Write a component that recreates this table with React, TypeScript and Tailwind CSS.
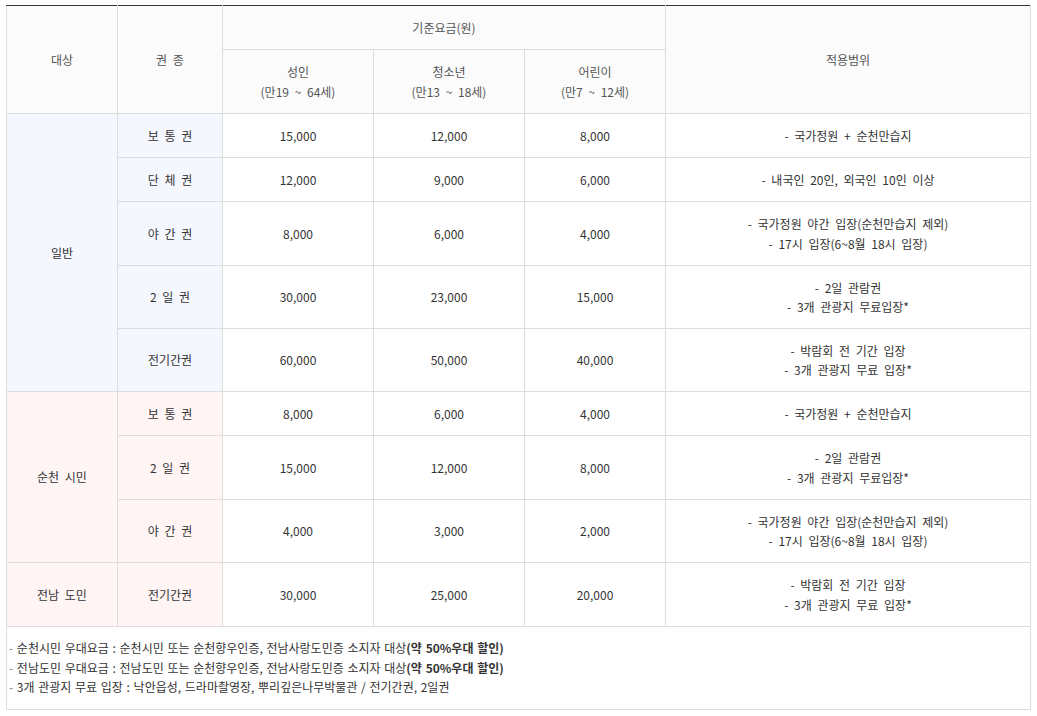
import React from 'react';

type Row = {
  group?: { label: string; rows: number; tone: 'blue' | 'pink' };
  ticket: string;
  tone: 'blue' | 'pink';
  adult: string;
  youth: string;
  child: string;
  scope: string[];
  h: string;
};

const rows: Row[] = [
  { group: { label: '일반', rows: 5, tone: 'blue' }, tone: 'blue', ticket: '보 통 권', adult: '15,000', youth: '12,000', child: '8,000', scope: ['- 국가정원 + 순천만습지'], h: 'h-[44px]' },
  { tone: 'blue', ticket: '단 체 권', adult: '12,000', youth: '9,000', child: '6,000', scope: ['- 내국인 20인, 외국인 10인 이상'], h: 'h-[44px]' },
  { tone: 'blue', ticket: '야 간 권', adult: '8,000', youth: '6,000', child: '4,000', scope: ['- 국가정원 야간 입장(순천만습지 제외)', '- 17시 입장(6~8월 18시 입장)'], h: 'h-[64px]' },
  { tone: 'blue', ticket: '2 일 권', adult: '30,000', youth: '23,000', child: '15,000', scope: ['- 2일 관람권', '- 3개 관광지 무료입장*'], h: 'h-[63px]' },
  { tone: 'blue', ticket: '전기간권', adult: '60,000', youth: '50,000', child: '40,000', scope: ['- 박람회 전 기간 입장', '- 3개 관광지 무료 입장*'], h: 'h-[63px]' },
  { group: { label: '순천 시민', rows: 3, tone: 'pink' }, tone: 'pink', ticket: '보 통 권', adult: '8,000', youth: '6,000', child: '4,000', scope: ['- 국가정원 + 순천만습지'], h: 'h-[44px]' },
  { tone: 'pink', ticket: '2 일 권', adult: '15,000', youth: '12,000', child: '8,000', scope: ['- 2일 관람권', '- 3개 관광지 무료입장*'], h: 'h-[64px]' },
  { tone: 'pink', ticket: '야 간 권', adult: '4,000', youth: '3,000', child: '2,000', scope: ['- 국가정원 야간 입장(순천만습지 제외)', '- 17시 입장(6~8월 18시 입장)'], h: 'h-[63px]' },
  { group: { label: '전남 도민', rows: 1, tone: 'pink' }, tone: 'pink', ticket: '전기간권', adult: '30,000', youth: '25,000', child: '20,000', scope: ['- 박람회 전 기간 입장', '- 3개 관광지 무료 입장*'], h: 'h-[64px]' },
];

const cell = 'border border-[#dddddd] text-center align-middle font-normal [word-spacing:3px]';

const App: React.FC = () => {
  return (
    <div
      className="min-h-[716px] bg-white pl-[6px] pt-[5px] text-[12px] leading-[19.5px] text-[#333]"
      style={{ fontFamily: '"Noto Sans CJK KR", "Noto Sans", sans-serif' }}
    >
      <table className="w-[1024px] table-fixed border-collapse">
        <colgroup>
          <col className="w-[111px]" />
          <col className="w-[105px]" />
          <col className="w-[151px]" />
          <col className="w-[151px]" />
          <col className="w-[141px]" />
          <col className="w-[365px]" />
        </colgroup>
        <thead className="bg-[#fbfbfb] text-[#555]">
          <tr className="h-[44px]">
            <th rowSpan={2} className={`${cell} border-t-[#333]`}>대상</th>
            <th rowSpan={2} className={`${cell} border-t-[#333]`}>권 종</th>
            <th colSpan={3} className={`${cell} border-t-[#333]`}>기준요금(원)</th>
            <th rowSpan={2} className={`${cell} border-t-[#333]`}>적용범위</th>
          </tr>
          <tr className="h-[64px]">
            <th className={cell}>성인<br />(만19 ~ 64세)</th>
            <th className={cell}>청소년<br />(만13 ~ 18세)</th>
            <th className={cell}>어린이<br />(만7 ~ 12세)</th>
          </tr>
        </thead>
        <tbody>
          {rows.map((r, i) => {
            const bg = r.tone === 'blue' ? 'bg-[#f4f7fd]' : 'bg-[#fff5f5]';
            return (
              <tr key={i} className={r.h}>
                {r.group && (
                  <td
                    rowSpan={r.group.rows}
                    className={`${cell} ${r.group.tone === 'blue' ? 'bg-[#f4f7fd]' : 'bg-[#fff5f5]'}`}
                  >
                    {r.group.label}
                  </td>
                )}
                <td className={`${cell} ${bg}`}>{r.ticket}</td>
                <td className={cell}>{r.adult}</td>
                <td className={cell}>{r.youth}</td>
                <td className={cell}>{r.child}</td>
                <td className={cell}>
                  {r.scope.map((s, j) => (
                    <div key={j}>{s}</div>
                  ))}
                </td>
              </tr>
            );
          })}
          <tr>
            <td colSpan={6} className="border border-[#dddddd] pb-[12px] pl-[2px] pt-[11px] text-left [word-spacing:1px]">
              <p>
                <span className="text-[#888]">- </span>순천시민 우대요금 : 순천시민 또는 순천향우인증, 전남사랑도민증 소지자 대상
                <b className="font-bold">(약 50%우대 할인)</b>
              </p>
              <p>
                <span className="text-[#888]">- </span>전남도민 우대요금 : 전남도민 또는 순천향우인증, 전남사랑도민증 소지자 대상
                <b className="font-bold">(약 50%우대 할인)</b>
              </p>
              <p>
                <span className="text-[#888]">- </span>3개 관광지 무료 입장 : 낙안읍성, 드라마촬영장, 뿌리깊은나무박물관 / 전기간권, 2일권
              </p>
            </td>
          </tr>
        </tbody>
      </table>
    </div>
  );
};

export default App;
